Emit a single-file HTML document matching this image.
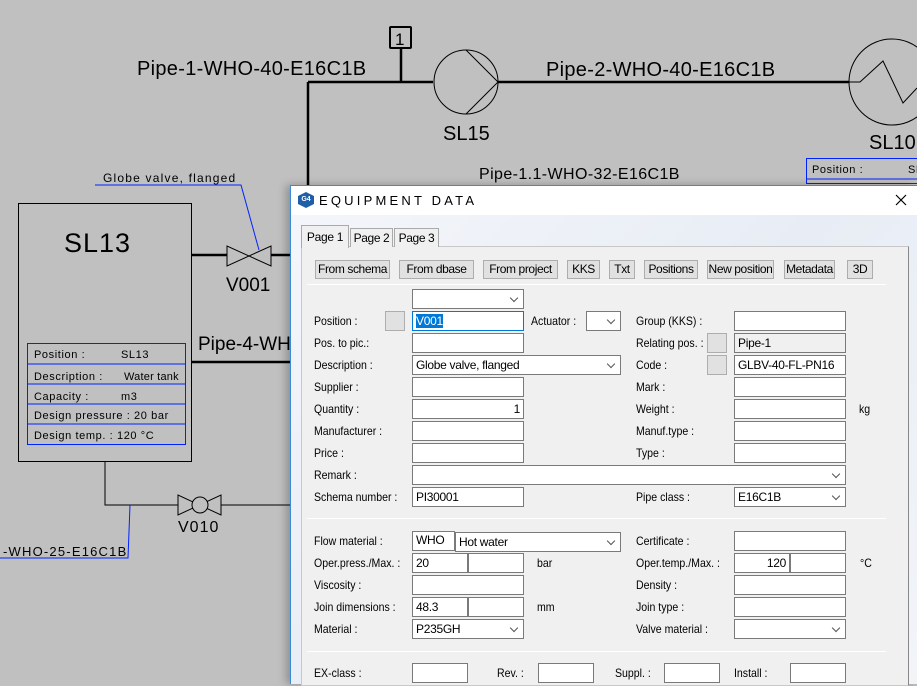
<!DOCTYPE html>
<html><head><meta charset="utf-8"><style>
*{margin:0;padding:0;box-sizing:border-box}
body{width:917px;height:684px;overflow:hidden;background:#c0c0c0;position:relative;font-family:"Liberation Sans",Arial,sans-serif}
.a{position:absolute}
.l{position:absolute;font-size:12px;color:#000;line-height:14px;white-space:nowrap;transform:scaleX(.88);transform-origin:left}
.f{position:absolute;background:#fff;border:1px solid #7a7a7a;height:20px;font-size:12px;line-height:18px;padding-left:3px;white-space:nowrap;letter-spacing:-0.3px}
.c::after{content:"";position:absolute;right:6px;top:5px;width:5px;height:5px;border-right:1px solid #555;border-bottom:1px solid #555;transform:rotate(45deg)}
.g{position:absolute;background:#e1e1e1;border:1px solid #adadad;width:20px;height:20px}
.b{position:absolute;top:260px;height:19px;background:#e1e1e1;border:1px solid #adadad;font-size:12px;line-height:17px;text-align:center;white-space:nowrap;letter-spacing:-0.4px;overflow:hidden}
.sep{position:absolute;left:307px;width:579px;height:1px;background:#a0a0a0;border-bottom:1px solid #fff}
</style></head><body>
<svg class="a" style="left:0;top:0" width="917" height="684">
<g font-family="Liberation Sans,Arial,sans-serif" fill="#000">
<text x="137" y="75" font-size="20" letter-spacing="0.3">Pipe-1-WHO-40-E16C1B</text>
<text x="546" y="76" font-size="20" letter-spacing="0.3">Pipe-2-WHO-40-E16C1B</text>
<text x="443" y="140" font-size="20">SL15</text>
<text x="869" y="149" font-size="20">SL10</text>
<text x="479" y="179" font-size="16" letter-spacing="0.4">Pipe-1.1-WHO-32-E16C1B</text>
<text x="103" y="182" font-size="12" letter-spacing="1.2">Globe valve, flanged</text>
<text x="64" y="252" font-size="27" letter-spacing="1">SL13</text>
<text x="226" y="291" font-size="19">V001</text>
<text x="198" y="350" font-size="19">Pipe-4-WHO</text>
<text x="178" y="532" font-size="16" letter-spacing="1">V010</text>
<text x="3" y="556" font-size="13" letter-spacing="1.2">-WHO-25-E16C1B</text>
<text x="395" y="45" font-size="17">1</text>
</g>
<g stroke="#000" fill="none">
<path d="M308 82H433M498 82H849M308 82V185M401 48V82" stroke-width="2.5"/>
<rect x="390" y="27" width="21" height="21" stroke-width="2" rx="1"/>
<circle cx="466" cy="82" r="32"/>
<path d="M466 50L498 82L466 114"/>
<circle cx="892" cy="82" r="43"/>
<path d="M849 82H860L883 61L903 103L917 88"/>
<rect x="18.5" y="203.5" width="173" height="258"/>
<path d="M191 255H227M271 255H290M191 362H290" stroke-width="2.5"/>
<path d="M227 246V266L271 246V266Z"/>
<path d="M105 461V505H178M221 505H290"/>
<path d="M178 495V515L221 495V515Z"/><circle cx="200" cy="505" r="8" fill="#c0c0c0"/>
</g>
<g stroke="#0022ff" fill="none">
<path d="M95 185H241L259 250"/>
<path d="M130 505L128 558H0"/>
<rect x="27.5" y="343.5" width="158" height="101"/>
<path d="M27 364H185M27 384H185M27 404H185M27 424H185"/>
<rect x="806.5" y="158.5" width="120" height="25"/>
<path d="M806 179H917"/>
</g>
<g font-family="Liberation Sans,Arial,sans-serif" font-size="11" letter-spacing="0.6" fill="#000">
<text x="34" y="358">Position :</text><text x="121" y="358">SL13</text>
<text x="34" y="380">Description :</text><text x="124" y="380" letter-spacing="0.2">Water tank</text>
<text x="34" y="400">Capacity :</text><text x="121" y="400">m3</text>
<text x="34" y="419">Design pressure : 20 bar</text>
<text x="34" y="439">Design temp. :  120 °C</text>
<text x="812" y="173">Position :</text><text x="908" y="173">SL</text>
</g>
</svg>
<div class="a" style="left:290px;top:185px;width:627px;height:499px;background:linear-gradient(135deg,#f4f6fa,#e8edf5 50%,#f2f4f8);border-left:1px solid #3b8ad8;border-top:1px solid #3b8ad8;box-shadow:-4px 0 8px rgba(0,0,0,.25)"></div>
<div class="a" style="left:291px;top:186px;width:626px;height:29px;background:#fff"></div>
<div class="a" style="left:298px;top:192px;width:16px;height:16px;background:#1f5fa8;clip-path:polygon(50% 0,100% 25%,100% 75%,50% 100%,0 75%,0 25%);color:#fff;font-size:7px;font-weight:bold;line-height:16px;text-align:center">G4</div>
<div class="a" style="left:319px;top:193px;font-size:13px;letter-spacing:3.2px;color:#000">EQUIPMENT DATA</div>
<svg class="a" style="left:895px;top:194px" width="12" height="12"><path d="M1 1L11 11M11 1L1 11" stroke="#000" stroke-width="1.2"/></svg>
<div class="a" style="left:301px;top:246px;width:608px;height:440px;background:#f0f0f0;border:1px solid #c8c8c8;border-right:1px solid #888"></div>
<div class="a" style="left:301px;top:225px;width:48px;height:23px;background:#f0f0f0;border:1px solid #aaa;border-bottom:none;font-size:12px;line-height:22px;text-align:center;letter-spacing:-0.3px">Page 1</div>
<div class="a" style="left:350px;top:228px;width:43px;height:19px;background:#f0f0f0;border:1px solid #aaa;border-bottom:none;font-size:12px;line-height:18px;text-align:center;letter-spacing:-0.4px">Page 2</div>
<div class="a" style="left:394px;top:228px;width:45px;height:19px;background:#f0f0f0;border:1px solid #aaa;border-bottom:none;font-size:12px;line-height:18px;text-align:center;letter-spacing:-0.4px">Page 3</div>
<div class="b" style="left:315px;width:75px">From schema</div>
<div class="b" style="left:399px;width:75px">From dbase</div>
<div class="b" style="left:483px;width:75px">From project</div>
<div class="b" style="left:567px;width:33px">KKS</div>
<div class="b" style="left:609px;width:26px">Txt</div>
<div class="b" style="left:644px;width:54px">Positions</div>
<div class="b" style="left:707px;width:67px">New position</div>
<div class="b" style="left:784px;width:51px">Metadata</div>
<div class="b" style="left:847px;width:26px">3D</div>
<div class="sep" style="top:284px"></div>
<div class="sep" style="top:518px"></div>
<div class="sep" style="top:651px"></div>

<div class="f c" style="left:412px;top:289px;width:112px"></div>
<div class="l" style="left:314px;top:314px">Position :</div><div class="g" style="left:385px;top:311px"></div>
<div class="f" style="left:412px;top:311px;width:112px;border-color:#0078d7"><span style="background:#0078d7;color:#fff">V001</span></div>
<div class="l" style="left:531px;top:314px">Actuator :</div><div class="f c" style="left:586px;top:311px;width:35px"></div>
<div class="l" style="left:314px;top:336px">Pos. to pic.:</div><div class="f" style="left:412px;top:333px;width:112px"></div>
<div class="l" style="left:314px;top:358px">Description :</div><div class="f c" style="left:412px;top:355px;width:209px">Globe valve, flanged</div>
<div class="l" style="left:314px;top:380px">Supplier :</div><div class="f" style="left:412px;top:377px;width:112px"></div>
<div class="l" style="left:314px;top:402px">Quantity :</div><div class="f" style="left:412px;top:399px;width:112px;text-align:right;padding-right:3px">1</div>
<div class="l" style="left:314px;top:424px">Manufacturer :</div><div class="f" style="left:412px;top:421px;width:112px"></div>
<div class="l" style="left:314px;top:446px">Price :</div><div class="f" style="left:412px;top:443px;width:112px"></div>
<div class="l" style="left:314px;top:468px">Remark :</div><div class="f c" style="left:412px;top:465px;width:434px"></div>
<div class="l" style="left:314px;top:490px">Schema number :</div><div class="f" style="left:412px;top:487px;width:112px">PI30001</div>

<div class="l" style="left:636px;top:314px">Group (KKS) :</div><div class="f" style="left:734px;top:311px;width:112px"></div>
<div class="l" style="left:636px;top:336px">Relating pos. :</div><div class="g" style="left:707px;top:333px"></div><div class="f" style="left:734px;top:333px;width:112px;background:#f0f0f0">Pipe-1</div>
<div class="l" style="left:636px;top:358px">Code :</div><div class="g" style="left:707px;top:355px"></div><div class="f" style="left:734px;top:355px;width:112px">GLBV-40-FL-PN16</div>
<div class="l" style="left:636px;top:380px">Mark :</div><div class="f" style="left:734px;top:377px;width:112px"></div>
<div class="l" style="left:636px;top:402px">Weight :</div><div class="f" style="left:734px;top:399px;width:112px"></div><div class="l" style="left:859px;top:402px">kg</div>
<div class="l" style="left:636px;top:424px">Manuf.type :</div><div class="f" style="left:734px;top:421px;width:112px"></div>
<div class="l" style="left:636px;top:446px">Type :</div><div class="f" style="left:734px;top:443px;width:112px"></div>
<div class="l" style="left:636px;top:490px">Pipe class :</div><div class="f c" style="left:734px;top:487px;width:112px">E16C1B</div>

<div class="l" style="left:314px;top:534px">Flow material :</div><div class="f" style="left:412px;top:531px;width:43px;line-height:16px">WHO</div><div class="f c" style="left:455px;top:532px;width:166px">Hot water</div>
<div class="l" style="left:314px;top:556px">Oper.press./Max. :</div><div class="f" style="left:412px;top:553px;width:56px">20</div><div class="f" style="left:468px;top:553px;width:56px"></div><div class="l" style="left:537px;top:556px">bar</div>
<div class="l" style="left:314px;top:578px">Viscosity :</div><div class="f" style="left:412px;top:575px;width:112px"></div>
<div class="l" style="left:314px;top:600px">Join dimensions :</div><div class="f" style="left:412px;top:597px;width:56px">48.3</div><div class="f" style="left:468px;top:597px;width:56px"></div><div class="l" style="left:537px;top:600px">mm</div>
<div class="l" style="left:314px;top:622px">Material :</div><div class="f c" style="left:412px;top:619px;width:112px">P235GH</div>
<div class="l" style="left:636px;top:534px">Certificate :</div><div class="f" style="left:734px;top:531px;width:112px"></div>
<div class="l" style="left:636px;top:556px">Oper.temp./Max. :</div><div class="f" style="left:734px;top:553px;width:56px;text-align:right;padding-right:3px">120</div><div class="f" style="left:790px;top:553px;width:56px"></div><div class="l" style="left:860px;top:556px">°C</div>
<div class="l" style="left:636px;top:578px">Density :</div><div class="f" style="left:734px;top:575px;width:112px"></div>
<div class="l" style="left:636px;top:600px">Join type :</div><div class="f" style="left:734px;top:597px;width:112px"></div>
<div class="l" style="left:636px;top:622px">Valve material :</div><div class="f c" style="left:734px;top:619px;width:112px"></div>

<div class="l" style="left:314px;top:666px">EX-class :</div><div class="f" style="left:412px;top:663px;width:56px"></div>
<div class="l" style="left:497px;top:666px">Rev. :</div><div class="f" style="left:538px;top:663px;width:56px"></div>
<div class="l" style="left:615px;top:666px">Suppl. :</div><div class="f" style="left:664px;top:663px;width:56px"></div>
<div class="l" style="left:734px;top:666px">Install :</div><div class="f" style="left:790px;top:663px;width:56px"></div>
</body></html>
